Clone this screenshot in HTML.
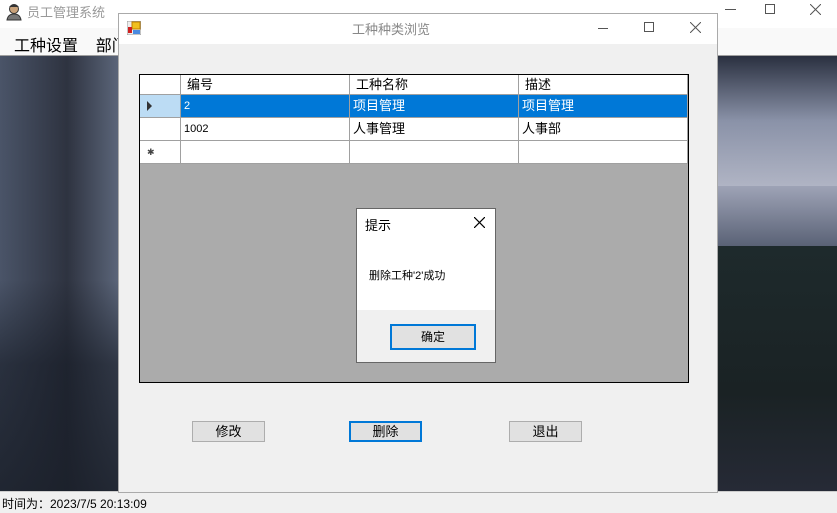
<!DOCTYPE html>
<html><head><meta charset="utf-8"><style>
*{margin:0;padding:0;box-sizing:border-box}
body{width:837px;height:513px;overflow:hidden;position:relative;background:#f0f0f0;font-family:"Liberation Sans","Noto Sans CJK SC",sans-serif;font-size:12px;color:#000}
.abs{position:absolute}
.cell{position:absolute;border-right:1px solid #a0a0a0;border-bottom:1px solid #a0a0a0;padding-left:3px;line-height:22px;background:#fff;white-space:nowrap}
.btn{position:absolute;height:21px;width:73px;background:#e1e1e1;border:1px solid #adadad;text-align:center;line-height:19px;font-size:13px}
</style></head><body>
<div class="abs" style="left:0;top:0;width:837px;height:28px;background:#fff"></div>
<svg class="abs" style="left:5px;top:3px" width="18" height="18" viewBox="0 0 18 18"><circle cx="9" cy="6" r="4.5" fill="#c9a27a" stroke="#333"/><path d="M4 4 Q9 -1 14 4" fill="#333"/><path d="M2 17 Q3 11 9 11 Q15 11 16 17Z" fill="#777" stroke="#333"/></svg>
<div class="abs" style="left:27px;top:2px;font-size:13px;color:#999">员工管理系统</div>
<div class="abs" style="left:725px;top:9px;width:11px;border-top:1px solid #555"></div>
<div class="abs" style="left:765px;top:4px;width:10px;height:10px;border:1px solid #555"></div>
<svg class="abs" style="left:810px;top:4px" width="11" height="11"><path d="M0 0L11 11M11 0L0 11" stroke="#555" stroke-width="1"/></svg>
<div class="abs" style="left:0;top:28px;width:837px;height:28px;background:#f9f9f9;border-bottom:1px solid #a0a0a0"></div>
<div class="abs" style="left:14px;top:32px;font-size:16px">工种设置&nbsp;&nbsp;&nbsp;&nbsp;部门</div>
<div class="abs" style="left:0;top:56px;width:837px;height:435px;background:linear-gradient(90deg,#4a5468 0%,#2e3340 8%,#5a6478 14%,#333a48 30%,#1e2430 60%,#6a7185 86%,#9aa0b5 92%,#4a5262 100%)"></div>
<div class="abs" style="left:0;top:280px;width:837px;height:211px;background:linear-gradient(180deg,rgba(20,25,35,0) 0%,rgba(20,25,35,.6) 40%,rgba(25,30,40,.85) 100%)"></div>
<div class="abs" style="left:718px;top:56px;width:119px;height:130px;background:linear-gradient(180deg,#2a3040,#8a92a8 50%,#b0b4c4)"></div>
<div class="abs" style="left:718px;top:186px;width:119px;height:60px;background:linear-gradient(180deg,#9ea3b6,#5a6276)"></div>
<div class="abs" style="left:718px;top:246px;width:119px;height:245px;background:linear-gradient(180deg,#1e2a2c,#1a2224 60%,#262a36)"></div>
<div class="abs" style="left:0;top:491px;width:837px;height:22px;background:#f0f0f0;border-top:1px solid #ccc"></div>
<div class="abs" style="left:2px;top:495px;font-size:12px">时间为：2023/7/5 20:13:09</div>
<div class="abs" style="left:118px;top:13px;width:600px;height:480px;background:#f0f0f0;border:1px solid #aaa"></div>
<div class="abs" style="left:119px;top:14px;width:598px;height:30px;background:#fff"></div>
<svg class="abs" style="left:127px;top:21px" width="14" height="14"><rect x="0" y="0" width="14" height="14" fill="#eee" stroke="#999"/><rect x="5" y="1" width="8" height="7" fill="#f0c020" stroke="#c08000"/><rect x="1" y="6" width="4" height="6" fill="#d02020"/><rect x="6" y="9" width="7" height="4" fill="#4a8ae0"/></svg>
<div class="abs" style="left:352px;top:19px;font-size:13px;color:#888">工种种类浏览</div>
<div class="abs" style="left:598px;top:28px;width:10px;border-top:1px solid #555"></div>
<div class="abs" style="left:644px;top:22px;width:10px;height:10px;border:1px solid #555"></div>
<svg class="abs" style="left:690px;top:22px" width="11" height="11"><path d="M0 0L11 11M11 0L0 11" stroke="#555" stroke-width="1"/></svg>
<div class="abs" style="left:139px;top:74px;width:550px;height:309px;background:#ababab;border:1px solid #000"></div>
<div class="cell" style="left:140px;top:75px;width:41px;height:20px"></div>
<div class="cell" style="left:181px;top:75px;width:169px;height:20px;line-height:20px;padding-left:6px;font-size:13px">编号</div>
<div class="cell" style="left:350px;top:75px;width:169px;height:20px;line-height:20px;padding-left:6px;font-size:13px">工种名称</div>
<div class="cell" style="left:519px;top:75px;width:169px;height:20px;line-height:20px;padding-left:6px;font-size:13px">描述</div>
<div class="cell" style="left:140px;top:95px;width:41px;height:23px;background:#bcdcf4"></div>
<div class="abs" style="left:147px;top:101px;width:0;height:0;border-left:5px solid #333;border-top:5px solid transparent;border-bottom:5px solid transparent"></div>
<div class="cell" style="left:181px;top:95px;width:169px;height:23px;background:#0078d7;color:#fff;font-size:11px">2</div>
<div class="cell" style="left:350px;top:95px;width:169px;height:23px;background:#0078d7;color:#fff;font-size:13px">项目管理</div>
<div class="cell" style="left:519px;top:95px;width:169px;height:23px;background:#0078d7;color:#fff;font-size:13px">项目管理</div>
<div class="cell" style="left:140px;top:118px;width:41px;height:23px"></div>
<div class="cell" style="left:181px;top:118px;width:169px;height:23px;font-size:11px">1002</div>
<div class="cell" style="left:350px;top:118px;width:169px;height:23px;font-size:13px">人事管理</div>
<div class="cell" style="left:519px;top:118px;width:169px;height:23px;font-size:13px">人事部</div>
<div class="cell" style="left:140px;top:141px;width:41px;height:23px;font-size:9px;padding-left:7px;color:#444">✱</div>
<div class="cell" style="left:181px;top:141px;width:169px;height:23px"></div>
<div class="cell" style="left:350px;top:141px;width:169px;height:23px"></div>
<div class="cell" style="left:519px;top:141px;width:169px;height:23px"></div>
<div class="btn" style="left:192px;top:421px">修改</div>
<div class="btn" style="left:349px;top:421px;border:2px solid #0078d7;line-height:17px">删除</div>
<div class="btn" style="left:509px;top:421px">退出</div>
<div class="abs" style="left:356px;top:208px;width:140px;height:155px;background:#f0f0f0;border:1px solid #666"></div>
<div class="abs" style="left:357px;top:209px;width:138px;height:101px;background:#fff"></div>
<div class="abs" style="left:365px;top:215px;font-size:13px">提示</div>
<svg class="abs" style="left:474px;top:217px" width="11" height="11"><path d="M0 0L11 11M11 0L0 11" stroke="#000" stroke-width="1.2"/></svg>
<div class="abs" style="left:369px;top:267px;font-size:11px">删除工种'2'成功</div>
<div class="abs" style="left:390px;top:324px;width:86px;height:26px;background:#e1e1e1;border:2px solid #0078d7;text-align:center;line-height:22px;font-size:12px">确定</div>
</body></html>
